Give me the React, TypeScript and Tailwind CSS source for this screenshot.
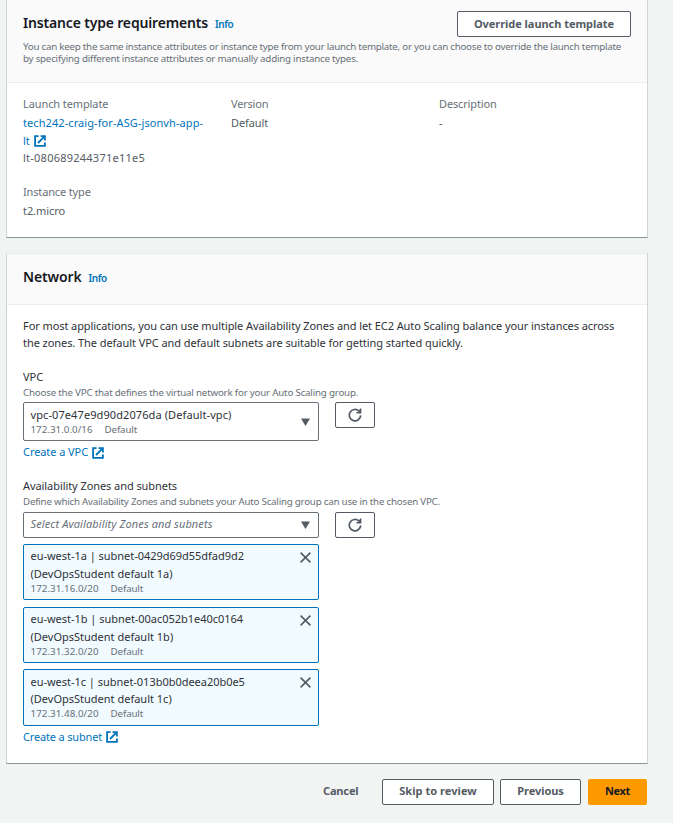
import type { ReactNode } from "react";

function ExternalIcon({ className = "" }: { className?: string }) {
  return (
    <svg viewBox="0 0 12 12" className={"inline-block h-3 w-3 shrink-0 " + className} fill="none" stroke="#0073bb" strokeWidth="1.8">
      <path d="M4.6 1.1H1.1v9.8h9.8V7.4" />
      <path d="M6.6 1.1h4.3v4.3M10.6 1.4 4 8" />
    </svg>
  );
}

function RefreshButton() {
  return (
    <button className="flex h-[26px] w-10 items-center justify-center rounded-[2px] border border-[#545b64] bg-white">
      <svg viewBox="0 0 14 14" className="h-3.5 w-3.5" fill="none" stroke="#545b64" strokeWidth="1.7">
        <path d="M12.7 7.4A5.7 5.7 0 1 1 10.9 3" />
        <path d="M13.4 0.6V5.4H8.4V4.2L10.5 3.6 12 .6z" fill="#545b64" stroke="none" />
      </svg>
    </button>
  );
}

function Caret() {
  return (
    <svg viewBox="0 0 9 8" className="h-2 w-[9px]" fill="#545b64">
      <path d="M0 0.5h9L4.5 8z" />
    </svg>
  );
}

function CloseIcon() {
  return (
    <svg viewBox="0 0 11 11" className="h-[11px] w-[11px]" fill="none" stroke="#545b64" strokeWidth="1.6">
      <path d="M.6.6l9.8 9.8M10.4.6.6 10.4" />
    </svg>
  );
}

function Button({ children, className = "" }: { children: ReactNode; className?: string }) {
  return (
    <button className={"flex h-[26px] items-center justify-center rounded-[2px] border border-[#545b64] bg-white font-bold leading-[18px] whitespace-nowrap text-[#545b64] " + className}>
      {children}
    </button>
  );
}

const subnets = [
  { name: "eu-west-1a | subnet-0429d69d55dfad9d2", tag: "(DevOpsStudent default 1a)", cidr: "172.31.16.0/20", box: "h-14 pt-0.5", nameBox: "" },
  { name: "eu-west-1b | subnet-00ac052b1e40c0164", tag: "(DevOpsStudent default 1b)", cidr: "172.31.32.0/20", box: "mt-[7px] h-14 pt-0.5", nameBox: "" },
  { name: "eu-west-1c | subnet-013b0b0deea20b0e5", tag: "(DevOpsStudent default 1c)", cidr: "172.31.48.0/20", box: "mt-1.5 h-[57px] pt-0.5", nameBox: "pt-px leading-[17px]" },
];

export default function App() {
  return (
    <div className="h-[823px] w-[673px] overflow-hidden bg-[#f2f3f3] pl-1.5 font-['Noto_Sans',sans-serif] text-[11px] leading-[18px] text-[#2e3238]">
      <section className="h-[238px] w-[642px] border-x border-b border-x-[#d0d5d5] border-b-[#879596] bg-white text-[#545b64]">
        <header className="h-[83px] border-b border-[#eaeded] bg-[#fafafa] px-4 pt-[11px]">
          <div className="flex justify-between">
            <div className="flex items-baseline gap-[7px] pt-[3px]">
              <h2 className="text-[14px] font-semibold tracking-[-0.17px] whitespace-nowrap text-[#16191f]">Instance type requirements</h2>
              <a className="text-[10px] font-semibold tracking-[-0.4px] text-[#0073bb]">Info</a>
            </div>
            <Button className="w-[174px] pb-px tracking-[-0.04px]">Override launch template</Button>
          </div>
          <p className="mt-[3.5px] text-[9.75px] leading-3 tracking-[-0.238px] whitespace-nowrap text-[#687078]">
            You can keep the same instance attributes or instance type from your launch template, or you can choose to override the launch template
            <br />
            <span className="tracking-[-0.222px]">by specifying different instance attributes or manually adding instance types.</span>
          </p>
        </header>
        <div className="grid grid-cols-[208px_208px_192px] px-4 pt-3">
          <div>
            <div className="tracking-[-0.1px] text-[#687078]">Launch template</div>
            <div className="mt-px whitespace-nowrap text-[#0073bb]">
              <span className="tracking-[0.08px]">tech242-craig-for-ASG-jsonvh-app-</span>
              <br />
              <span className="flex items-center gap-1">lt <ExternalIcon /></span>
            </div>
            <div className="-mt-px tracking-[0.24px]">lt-080689244371e11e5</div>
            <div className="mt-4 tracking-[-0.15px] text-[#687078]">Instance type</div>
            <div className="mt-px tracking-[-0.07px]">t2.micro</div>
          </div>
          <div>
            <div className="tracking-[-0.2px] text-[#687078]">Version</div>
            <div className="mt-px tracking-[-0.1px]">Default</div>
          </div>
          <div>
            <div className="tracking-[-0.15px] text-[#687078]">Description</div>
            <div className="mt-px">-</div>
          </div>
        </div>
      </section>

      <section className="mt-[15px] h-[511px] w-[642px] border border-x-[#d0d5d5] border-t-[#eaeded] border-b-[#879596] bg-white">
        <header className="flex h-[51px] items-baseline gap-[7px] border-b border-[#eaeded] bg-[#fafafa] px-4 pt-3.5">
          <h2 className="text-[14px] font-semibold tracking-[-0.15px] text-[#16191f]">Network</h2>
          <a className="text-[10px] font-semibold tracking-[-0.4px] text-[#0073bb]">Info</a>
        </header>
        <div className="px-4 pt-3">
          <p className="leading-[17px] tracking-[-0.08px] whitespace-nowrap">
            For most applications, you can use multiple Availability Zones and let EC2 Auto Scaling balance your instances across
            <br />
            <span className="tracking-[-0.064px]">the zones. The default VPC and default subnets are suitable for getting started quickly.</span>
          </p>

          <div className="mt-[17px]">VPC</div>
          <p className="mt-px text-[9.75px] leading-3 tracking-[-0.2px] text-[#687078]">Choose the VPC that defines the virtual network for your Auto Scaling group.</p>
          <div className="mt-[3px] flex gap-4">
            <div className="flex h-[39px] w-[296px] items-center justify-between rounded-[2px] border border-[#687078] pr-2 pl-[6.5px]">
              <div className="whitespace-nowrap">
                <div className="-mt-0.5 tracking-[0.094px]">vpc-07e47e9d90d2076da (Default-vpc)</div>
                <div className="flex gap-3 text-[9.75px] leading-3 text-[#687078]">
                  <span className="tracking-[0.03px]">172.31.0.0/16</span>
                  <span className="tracking-[-0.14px]">Default</span>
                </div>
              </div>
              <Caret />
            </div>
            <RefreshButton />
          </div>
          <div className="mt-0.5 flex items-center gap-1 text-[#0073bb]">
            <span className="tracking-[-0.07px]">Create a VPC</span>
            <ExternalIcon className="mt-px" />
          </div>

          <div className="mt-4 tracking-[-0.07px]">Availability Zones and subnets</div>
          <p className="mt-px text-[9.75px] leading-3 tracking-[-0.223px] text-[#687078]">Define which Availability Zones and subnets your Auto Scaling group can use in the chosen VPC.</p>
          <div className="mt-1 flex gap-4">
            <div className="flex h-[26px] w-[296px] items-center justify-between rounded-[2px] border border-[#687078] pr-2 pl-[6.5px]">
              <span className="pb-0.5 tracking-[0.11px] text-[#687078] italic">Select Availability Zones and subnets</span>
              <Caret />
            </div>
            <RefreshButton />
          </div>
          <div className="mt-1.5 flex flex-col">
            {subnets.map((s) => (
              <div key={s.cidr} className={"flex w-[296px] items-start justify-between rounded-[2px] border border-[#0073bb] bg-[#f1faff] pr-[7px] pl-[6.5px] whitespace-nowrap " + s.box}>
                <div>
                  <div className={"tracking-[-0.026px] " + s.nameBox}>{s.name}</div>
                  <div>{s.tag}</div>
                  <div className="flex gap-3 text-[9.75px] leading-3 text-[#687078]">
                    <span className="tracking-[0.06px]">{s.cidr}</span>
                    <span className="tracking-[-0.14px]">Default</span>
                  </div>
                </div>
                <div className="pt-[5px]">
                  <CloseIcon />
                </div>
              </div>
            ))}
          </div>
          <div className="mt-0.5 flex items-center gap-1 text-[#0073bb]">
            <span className="tracking-[-0.17px]">Create a subnet</span>
            <ExternalIcon />
          </div>
        </div>
      </section>

      <footer className="mt-[15px] flex w-[641px] items-center justify-end">
        <button className="mr-[23.5px] pb-0.5 font-bold tracking-[-0.13px] text-[#545b64]">Cancel</button>
        <Button className="mr-1.5 w-28 pb-0.5 tracking-[0.045px]">Skip to review</Button>
        <Button className="mr-[7px] w-[81px] pb-0.5 tracking-[-0.06px]">Previous</Button>
        <button className="flex h-[26px] w-[59px] items-center justify-center rounded-[2px] bg-[#ff9900] pb-0.5 font-bold tracking-[-0.3px] text-[#16191f]">Next</button>
      </footer>
    </div>
  );
}
